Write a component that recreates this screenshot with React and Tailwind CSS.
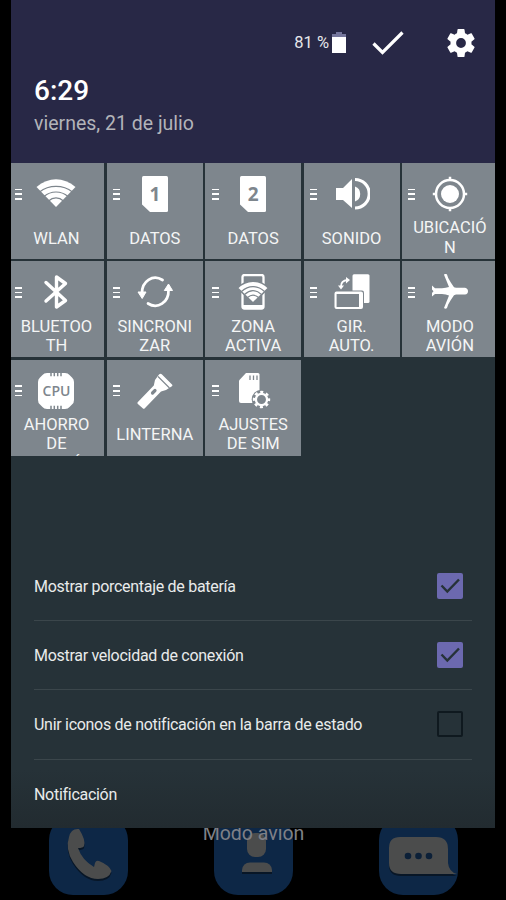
import clsx from 'clsx'

// ── Icons (36x36 grid) ─────────────────────────────────────────
const Icon = ({ children, className }) => (
  <svg viewBox="0 0 36 36" className={clsx('block h-9 w-9 shrink-0', className)} fill="#fff">
    {children}
  </svg>
)

const WifiIcon = () => (
  <svg viewBox="0 0 40 36" className="block h-9 w-10 shrink-0" fill="none" stroke="#fff">
    <path d="M.5 11C13 .8 27 .8 39.500 11L20 31Z" fill="#fff" stroke="none" />
    <g stroke="#7e868d" strokeWidth="1.200">
      <path d="M3.500 16C13 8.500 27 8.500 36.500 16" />
      <path d="M8 20.500C15 14.500 25 14.500 32 20.500" />
      <path d="M12.500 25C17 20.800 23 20.800 27.500 25" />
    </g>
  </svg>
)

const SimIcon = ({ n }) => (
  <span className="relative block h-9 w-9 shrink-0">
    <Icon>
      <path d="M6.500 0H29.500Q31 0 31 1.500V34.500Q31 36 29.500 36H13L5 28.500V1.500Q5 0 6.500 0Z" />
    </Icon>
    <span className="absolute inset-0 flex items-center justify-center font-['Open_Sans',sans-serif] text-[19px] leading-none font-bold text-[#7e868d]">
      {n}
    </span>
  </span>
)

const SoundIcon = () => (
  <Icon>
    <path d="M2 12H9L18 3V32L9 24H2Z" />
    <path d="M21 10.500A8 8 0 0 1 21 25.500Z" />
    <path d="M21 3.500A14.200 14.200 0 0 1 21 32" fill="none" stroke="#fff" strokeWidth="3.200" />
  </Icon>
)

const LocationIcon = () => (
  <Icon>
    <circle cx="18" cy="18" r="9" />
    <circle cx="18" cy="18" r="14" fill="none" stroke="#fff" strokeWidth="2.500" />
    <path d="M18 .8V5M18 31V35.200M.8 18H5M31 18H35.200" stroke="#fff" strokeWidth="2.500" />
  </Icon>
)

const BluetoothIcon = () => (
  <Icon>
    <path d="M8 8.500L27.500 26.500L18.500 33V3L27.500 9.500L8 27" fill="none" stroke="#fff" strokeWidth="3.400" strokeLinejoin="round" strokeLinecap="round" />
  </Icon>
)

const SyncIcon = () => (
  <Icon>
    <g fill="none" stroke="#fff" strokeWidth="2.700" strokeLinecap="round">
      <path d="M25.500 6C16 0 4.500 7 5 20" />
      <path d="M11 29.500C20.500 35.500 32 28.500 31.500 16" />
    </g>
    <path d="M1 18H9L5.200 24.500ZM27.300 16.500L31.500 10L35.500 16.500Z" stroke="#fff" strokeLinejoin="round" />
  </Icon>
)

const HotspotIcon = () => (
  <Icon>
    <rect x="7.500" y="1" width="21" height="33.500" rx="2" fill="none" stroke="#fff" strokeWidth="2.300" />
    <path d="M7 31H29V34H7Z" />
    <path d="M2.500 14C11.500 5 24.500 5 33.500 14L18 29Z" stroke="#7e868d" strokeWidth="1.600" />
    <g fill="none" stroke="#7e868d" strokeWidth="1.100">
      <path d="M6.500 17.500C13.500 11 22.500 11 29.500 17.500" />
      <path d="M9.500 20.500C15 15.500 21 15.500 26.500 20.500" />
      <path d="M12.500 23.500C16 20.500 20 20.500 23.500 23.500" />
    </g>
  </Icon>
)

const RotateIcon = () => (
  <Icon>
    <rect x="18.500" y=".2" width="17" height="28.800" rx="1.500" />
    <rect x="0" y="16.500" width="30" height="19.500" rx="2" fill="#7e868d" />
    <path d="M2.500 17.500H27Q29 17.500 29 19.500V33Q29 35 27 35H2.500Q.5 35 .5 33V19.500Q.5 17.500 2.500 17.500ZM2.600 20V33H25V20Z" fillRule="evenodd" />
    <path d="M7 12.500Q7 6.500 13.500 6" fill="none" stroke="#fff" strokeWidth="1.800" />
    <path d="M4 11.500H10L7 15.500ZM12 3L16 6L12 9.500Z" />
  </Icon>
)

const PlaneIcon = () => (
  <Icon>
    <path d="M0 11.500L3 14.300L10 14.300Q14 13.800 17 13L12 .7Q13.500 -1 15 .6L16.200 4L18.800 8.500L22 13.200L24 13.800H33Q36 14.500 36 17.200Q36 20 33 20.500H24L22 21.300L18.800 26L16.200 30.500L15 34Q13.500 35.500 12 34L17 21.500Q14 20.500 10 20.100L3 20L0 22.500V19L1.500 17.200L0 15.500Z" />
  </Icon>
)

const CpuIcon = () => (
  <span className="relative block h-9 w-9 shrink-0">
    <Icon>
      <path d="M9 0H27Q30 0 31.500 2L34 4.500Q36 6 36 9V27Q36 30 34 31.500L31.500 34Q30 36 27 36H9Q6 36 4.500 34L2 31.500Q0 30 0 27V9Q0 6 2 4.500L4.500 2Q6 0 9 0Z" />
      <path d="M13 0V3.200M16.300 0V3.200M19.700 0V3.200M23 0V3.200M13 32.800V36M16.300 32.800V36M19.700 32.800V36M23 32.800V36" stroke="#7e868d" strokeWidth="1.500" />
    </Icon>
    <span className="absolute inset-0 flex items-center justify-center font-['Open_Sans',sans-serif] text-[14px] leading-none font-semibold text-[#7e868d]">
      CPU
    </span>
  </span>
)

const TorchIcon = () => (
  <Icon>
    <path d="M22 1.500Q23.500 0 25 1.500L35 11.500Q36 13 34.500 13.500L29 17L24 18.500L7.800 35.200Q6.700 36.200 5.700 35.200L.9 30.900Q-.1 29.900 .9 28.900L16.800 12.500L18 7Z" />
    <path d="M21 3.500L32.500 15" stroke="#7e868d" strokeWidth="1.100" />
    <path d="M15.500 20L18 17.500" stroke="#7e868d" strokeWidth="3.200" strokeLinecap="round" />
  </Icon>
)

const SimSettingsIcon = () => (
  <Icon>
    <path d="M11 0H23Q24.500 0 24.500 1.500V30H6Q4 30 4 28V7.500Z" />
    <path d="M15 2.500V7M18.500 2.500V7M22 2.500V7" stroke="#7e868d" strokeWidth="1.300" />
    <circle cx="26.500" cy="26.500" r="9.800" fill="#7e868d" />
    <circle cx="26.500" cy="26.500" r="5.600" fill="none" stroke="#fff" strokeWidth="2.300" />
    <circle cx="26.500" cy="26.500" r="7.400" fill="none" stroke="#fff" strokeWidth="2.600" strokeDasharray="3 2.812" strokeDashoffset="1.500" />
  </Icon>
)

// ── Data ───────────────────────────────────────────────────────
const tiles = [
  { lines: ['WLAN'], icon: <WifiIcon /> },
  { lines: ['DATOS'], icon: <SimIcon n="1" /> },
  { lines: ['DATOS'], icon: <SimIcon n="2" /> },
  { lines: ['SONIDO'], icon: <SoundIcon /> },
  { lines: ['UBICACIÓ', 'N'], icon: <LocationIcon /> },
  { lines: ['BLUETOO', 'TH'], icon: <BluetoothIcon /> },
  { lines: ['SINCRONI', 'ZAR'], icon: <SyncIcon /> },
  { lines: ['ZONA', 'ACTIVA'], icon: <HotspotIcon /> },
  { lines: ['GIR.', 'AUTO.'], icon: <RotateIcon /> },
  { lines: ['MODO', 'AVIÓN'], icon: <PlaneIcon /> },
  { lines: ['AHORRO', 'DE', 'ENERGÍA'], icon: <CpuIcon /> },
  { lines: ['LINTERNA'], icon: <TorchIcon /> },
  { lines: ['AJUSTES', 'DE SIM'], icon: <SimSettingsIcon /> },
]

const settings = [
  { label: 'Mostrar porcentaje de batería', checked: true },
  { label: 'Mostrar velocidad de conexión', checked: true },
  { label: 'Unir iconos de notificación en la barra de estado', checked: false },
]

const Tile = ({ lines, icon }) => (
  <div className="relative flex h-24 flex-col items-center overflow-hidden bg-[#7e868d] pt-[13px]">
    <div className="absolute top-[25.500px] left-[6.500px] flex flex-col gap-[3px]">
      <span className="h-[1.800px] w-[7px] bg-white" />
      <span className="h-[1.800px] w-[7px] bg-white" />
      <span className="h-[1.800px] w-[7px] bg-white" />
    </div>
    {icon}
    <div className={clsx('flex h-[39.400px] shrink-0 flex-col items-center text-[16.500px] leading-[19.600px] whitespace-nowrap text-[#f4f5f5]', lines.length === 1 ? 'mt-[7px] justify-center' : 'mt-[6.300px]')}>
      {lines.map(line => <span key={line}>{line}</span>)}
    </div>
  </div>
)

const Checkbox = ({ checked }) => (
  <span className={clsx('flex h-[26px] w-[26px] items-center justify-center rounded-[2px]', checked ? 'bg-[#6c69af]' : 'border-2 border-[#0f191f]')}>
    {checked && (
      <svg viewBox="0 0 26 26" className="h-[26px] w-[26px]" fill="none" stroke="#263238" strokeWidth="2.400">
        <path d="M4.500 12.500L10.300 18.500L22 6.500" />
      </svg>
    )}
  </span>
)

const Header = () => (
  <header className="h-[163px] bg-[#282846] pl-[23px]">
    <div className="flex h-[72px] items-center justify-end pt-[13px] pr-5">
      <span className="pt-[2px] text-[16.500px] text-[#e6e6ea]">81 %</span>
      <svg viewBox="0 0 14 21" className="ml-[3px] h-[21px] w-[14px]">
        <path d="M4 0H10V2H14V6H0V2H4Z" fill="#75769c" />
        <rect y="5" width="14" height="16" fill="#fff" />
      </svg>
      <svg viewBox="0 0 32 24" className="ml-[26px] h-6 w-8" fill="none" stroke="#fff" strokeWidth="3.200">
        <path d="M1.500 12.500L10.500 21.500L30.500 1.500" />
      </svg>
      <svg viewBox="2 2 20 20" className="ml-[43px] h-7 w-7" fill="#fff">
        <path d="M19.430 12.980c.04-.32.07-.64.07-.98s-.03-.66-.07-.98l2.110-1.650c.19-.15.24-.42.12-.64l-2-3.460c-.12-.22-.39-.3-.61-.22l-2.490 1c-.52-.4-1.080-.73-1.690-.98l-.38-2.650C14.460 2.180 14.250 2 14 2h-4c-.25 0-.46.18-.49.42l-.38 2.650c-.61.25-1.170.59-1.690.98l-2.490-1c-.23-.09-.49 0-.61.22l-2 3.460c-.13.22-.07.49.12.64l2.110 1.650c-.04.32-.07.65-.07.98s.03.66.07.98l-2.110 1.650c-.19.15-.24.42-.12.64l2 3.460c.12.22.39.3.61.22l2.490-1c.52.4 1.080.73 1.690.98l.38 2.650c.03.24.24.42.49.42h4c.25 0 .46-.18.49-.42l.38-2.650c.61-.25 1.170-.59 1.690-.98l2.490 1c.23.09.49 0 .61-.22l2-3.460c.12-.22.07-.49-.12-.64zM12 15.500A3.500 3.500 0 1 1 12 8.500a3.500 3.500 0 0 1 0 7z" />
      </svg>
    </div>
    <div className="mt-[3px] text-[28px] leading-[32px] font-medium text-white">6:29</div>
    <div className="mt-[4px] text-[19.500px] leading-[26px] text-[#b3b4b9]">viernes, 21 de julio</div>
  </header>
)

const Dock = () => (
  <div className="-mt-3 flex justify-between pr-12 pl-[49px]">
    <svg viewBox="0 0 79 79" className="h-[79px] w-[79px]">
      <rect width="79" height="79" rx="24" fill="#0d2746" />
      <path d="M20 21Q22 12 30 13Q37 24 35 30Q34 32 29 32Q33 44 45 51L46 47Q47 44 50 45Q60 49 62.500 55Q60 63 49 63Q35 63 24 46Q16 33 20 21Z" fill="#081626" transform="translate(0 2)" />
      <path d="M20 21Q22 12 30 13Q37 24 35 30Q34 32 29 32Q33 44 45 51L46 47Q47 44 50 45Q60 49 62.500 55Q60 63 49 63Q35 63 24 46Q16 33 20 21Z" fill="#4b4c4c" />
    </svg>
    <div className="relative">
      <svg viewBox="0 0 79 79" className="h-[79px] w-[79px]">
        <rect width="79" height="79" rx="24" fill="#0d2746" />
        <rect x="28" y="56" width="30" height="2" fill="#081626" />
        <rect x="33" y="17" width="19" height="24" rx="8" fill="#4b4c4c" />
        <path d="M28 56V54Q29 46.500 36 46.500H50Q57 46.500 58 54V56Z" fill="#4b4c4c" />
      </svg>
      <span className="absolute top-[6px] left-1/2 -translate-x-1/2 text-[19.500px] leading-6 whitespace-nowrap text-[#7f8087]">Modo avión</span>
    </div>
    <svg viewBox="0 0 79 79" className="h-[79px] w-[79px]">
      <rect width="79" height="79" rx="24" fill="#0d2746" />
      <path d="M21 21H57Q69 21 69 33V47Q70 56 78 58H22Q10 58 10 47V32Q10 21 21 21Z" fill="#081626" transform="translate(0 2)" />
      <path d="M21 21H57Q69 21 69 33V47Q70 56 78 58H22Q10 58 10 47V32Q10 21 21 21Z" fill="#4b4c4c" />
      <g fill="#0c2038">
        <circle cx="29" cy="40" r="3.300" />
        <circle cx="39.500" cy="40" r="3.300" />
        <circle cx="50" cy="40" r="3.300" />
      </g>
    </svg>
  </div>
)

const App = () => (
  <div className="h-[900px] w-[506px] overflow-hidden bg-black font-['Roboto',sans-serif]">
    {/* ── Quick settings panel ── */}
    <main className="relative z-10 ml-[11px] h-[828px] w-[484px] overflow-hidden bg-linear-to-b from-[#263238] from-93% to-[#222b30]">
      <Header />

      <div className="-ml-[2.500px] grid h-[388.500px] w-[489.400px] grid-cols-5 content-start gap-x-[2.400px] gap-y-[2.300px]">
        {tiles.map((tile, i) => <Tile key={i} {...tile} />)}
      </div>

      <div className="mr-[23px] ml-[23px] text-[16px] tracking-[-0.290px] text-[#e9ebeb]">
        {settings.map(({ label, checked }) => (
          <div key={label} className="flex h-[69.400px] items-center justify-between border-b border-[#3b464b] pr-[9px]">
            <span className="pt-[2px]">{label}</span>
            <Checkbox checked={checked} />
          </div>
        ))}
        <div className="flex h-[69.400px] items-center pt-[2px]">Notificación</div>
      </div>
    </main>

    <Dock />
  </div>
)

export default App
